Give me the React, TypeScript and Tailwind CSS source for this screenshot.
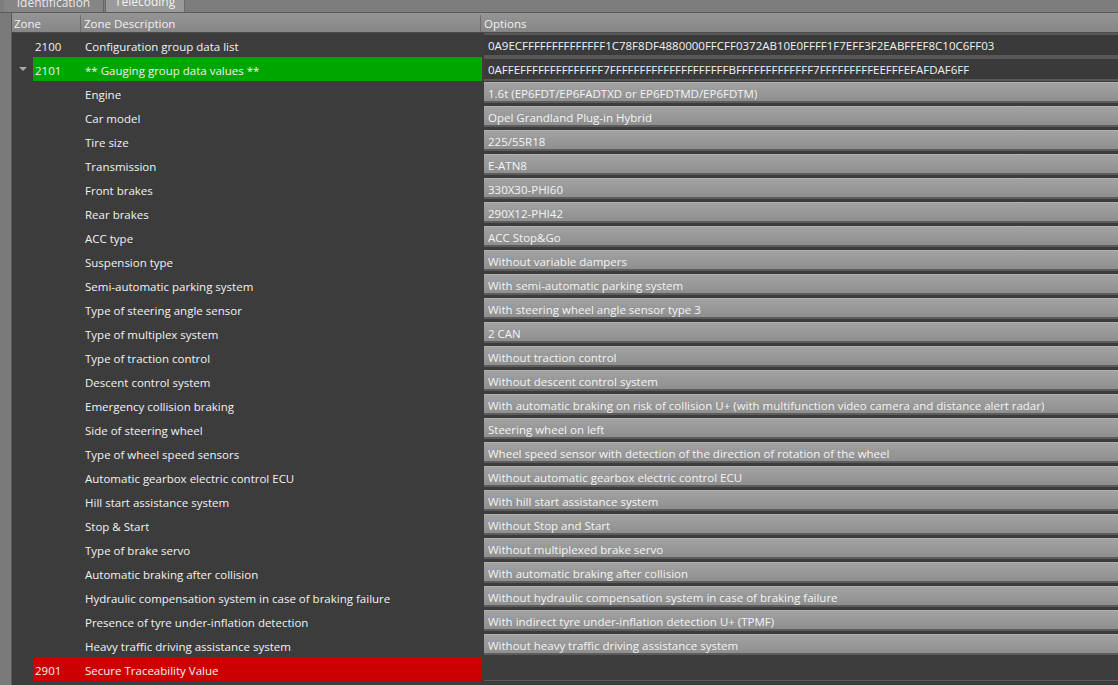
import React from "react";

interface ZoneRow {
  zone?: string;
  label: string;
  value: string;
  kind: "raw" | "group" | "option" | "secure";
  expander?: boolean;
}

const rows: ZoneRow[] = [
  {
    zone: "2100",
    label: "Configuration group data list",
    value: "0A9ECFFFFFFFFFFFFFF1C78F8DF4880000FFCFF0372AB10E0FFFF1F7EFF3F2EABFFEF8C10C6FF03",
    kind: "raw",
  },
  {
    zone: "2101",
    label: "** Gauging group data values **",
    value: "0AFFEFFFFFFFFFFFFFF7FFFFFFFFFFFFFFFFFFFFBFFFFFFFFFFFFF7FFFFFFFFFEEFFFEFAFDAF6FF",
    kind: "group",
    expander: true,
  },
  { label: "Engine", value: "1.6t (EP6FDT/EP6FADTXD or EP6FDTMD/EP6FDTM)", kind: "option" },
  { label: "Car model", value: "Opel Grandland Plug-in Hybrid", kind: "option" },
  { label: "Tire size", value: "225/55R18", kind: "option" },
  { label: "Transmission", value: "E-ATN8", kind: "option" },
  { label: "Front brakes", value: "330X30-PHI60", kind: "option" },
  { label: "Rear brakes", value: "290X12-PHI42", kind: "option" },
  { label: "ACC type", value: "ACC Stop&Go", kind: "option" },
  { label: "Suspension type", value: "Without variable dampers", kind: "option" },
  { label: "Semi-automatic parking system", value: "With semi-automatic parking system", kind: "option" },
  { label: "Type of steering angle sensor", value: "With steering wheel angle sensor type 3", kind: "option" },
  { label: "Type of multiplex system", value: "2 CAN", kind: "option" },
  { label: "Type of traction control", value: "Without traction control", kind: "option" },
  { label: "Descent control system", value: "Without descent control system", kind: "option" },
  {
    label: "Emergency collision braking",
    value: "With automatic braking on risk of collision U+ (with multifunction video camera and distance alert radar)",
    kind: "option",
  },
  { label: "Side of steering wheel", value: "Steering wheel on left", kind: "option" },
  {
    label: "Type of wheel speed sensors",
    value: "Wheel speed sensor with detection of the direction of rotation of the wheel",
    kind: "option",
  },
  {
    label: "Automatic gearbox electric control ECU",
    value: "Without automatic gearbox electric control ECU",
    kind: "option",
  },
  { label: "Hill start assistance system", value: "With hill start assistance system", kind: "option" },
  { label: "Stop & Start", value: "Without Stop and Start", kind: "option" },
  { label: "Type of brake servo", value: "Without multiplexed brake servo", kind: "option" },
  { label: "Automatic braking after collision", value: "With automatic braking after collision", kind: "option" },
  {
    label: "Hydraulic compensation system in case of braking failure",
    value: "Without hydraulic compensation system in case of braking failure",
    kind: "option",
  },
  {
    label: "Presence of tyre under-inflation detection",
    value: "With indirect tyre under-inflation detection U+ (TPMF)",
    kind: "option",
  },
  {
    label: "Heavy traffic driving assistance system",
    value: "Without heavy traffic driving assistance system",
    kind: "option",
  },
  { zone: "2901", label: "Secure Traceability Value", value: "", kind: "secure" },
];

const font = { fontFamily: '"Segoe UI", "Open Sans", "Noto Sans", sans-serif' };

const Row: React.FC<{ row: ZoneRow }> = ({ row }) => {
  const band =
    row.kind === "group" ? "bg-[#00a600]" : row.kind === "secure" ? "bg-[#cc0000]" : "bg-transparent";

  return (
    <div className="flex h-[24px] shrink-0 text-[11.5px] text-[#f2f2f2]">
      {/* expander gutter */}
      <div className="flex w-[21px] shrink-0 items-center justify-center">
        {row.expander && (
          <svg width="8" height="5" viewBox="0 0 8 5" className="mt-[1px]">
            <path d="M0 0 L8 0 L4 4 Z" fill="#a8a8a8" />
          </svg>
        )}
      </div>
      <div className={`flex w-[449px] shrink-0 items-center pt-[3px] ${band}`}>
        <div className="w-[50px] shrink-0 pl-[2px]">{row.zone}</div>
        <div className="truncate pl-[2px]">{row.label}</div>
      </div>
      <div className="flex-1 pl-[2px]">
        {row.kind === "option" && (
          <div className="mt-[1px] flex h-[21px] items-center overflow-hidden border-b-[2px] border-[#5c5c5c] bg-gradient-to-b from-[#a3a3a3] to-[#8f8f8f] pl-[4px] text-[#f4f4f4] shadow-[inset_0_1px_0_#b0b0b0]">
            <span className="translate-y-[2px] truncate">{row.value}</span>
          </div>
        )}
        {(row.kind === "raw" || row.kind === "group") && (
          <div className="flex h-[24px] items-center border-y-[2px] border-[#585858] bg-[#3a3a3a] pl-[4px] pt-[2px]">
            <span className="truncate">{row.value}</span>
          </div>
        )}
        {row.kind === "secure" && <div className="h-[24px] border-b border-[#5a5a5a] bg-[#3c3c3c]" />}
      </div>
    </div>
  );
};

export default function App() {
  return (
    <div className="flex h-[685px] w-[1118px] flex-col overflow-hidden bg-[#7d7d7d]" style={font}>
      {/* tab strip, scrolled so only the lower edge shows */}
      <div className="flex h-[12px] shrink-0 items-end overflow-hidden pl-[4px] text-[12px]">
        <div className="flex h-[12px] w-[100px] items-end justify-center border-r border-[#666] bg-[#858585] text-[#e8e8e8]">
          <span className="leading-[18px]">Identification</span>
        </div>
        <div className="ml-[1px] flex h-[14px] w-[80px] items-end justify-center border-x border-[#6a6a6a] bg-[#9a9a9a] text-[#f2f2f2]">
          <span className="leading-[20px]">Telecoding</span>
        </div>
      </div>
      <div className="h-[1px] shrink-0 bg-[#5a5a5a]" />
      <div className="flex min-h-0 flex-1">
        <div className="w-[11px] shrink-0 bg-[#7a7a7a]" />
        <div className="flex min-w-0 flex-1 flex-col border-l border-[#5a5a5a] bg-[#3c3c3c]">
          {/* column headers */}
          <div className="flex h-[20px] shrink-0 items-center border-b border-[#4a4a4a] bg-gradient-to-b from-[#959595] to-[#868686] pt-[2px] text-[11.5px] text-[#f2f2f2]">
            <div className="flex h-full w-[69px] shrink-0 items-center border-r border-[#6e6e6e] pl-[2px]">Zone</div>
            <div className="flex h-full w-[400px] shrink-0 items-center border-r border-[#6e6e6e] pl-[3px]">
              Zone Description
            </div>
            <div className="pl-[3px]">Options</div>
          </div>
          {rows.map((row, i) => (
            <Row key={i} row={row} />
          ))}
        </div>
      </div>
    </div>
  );
}
